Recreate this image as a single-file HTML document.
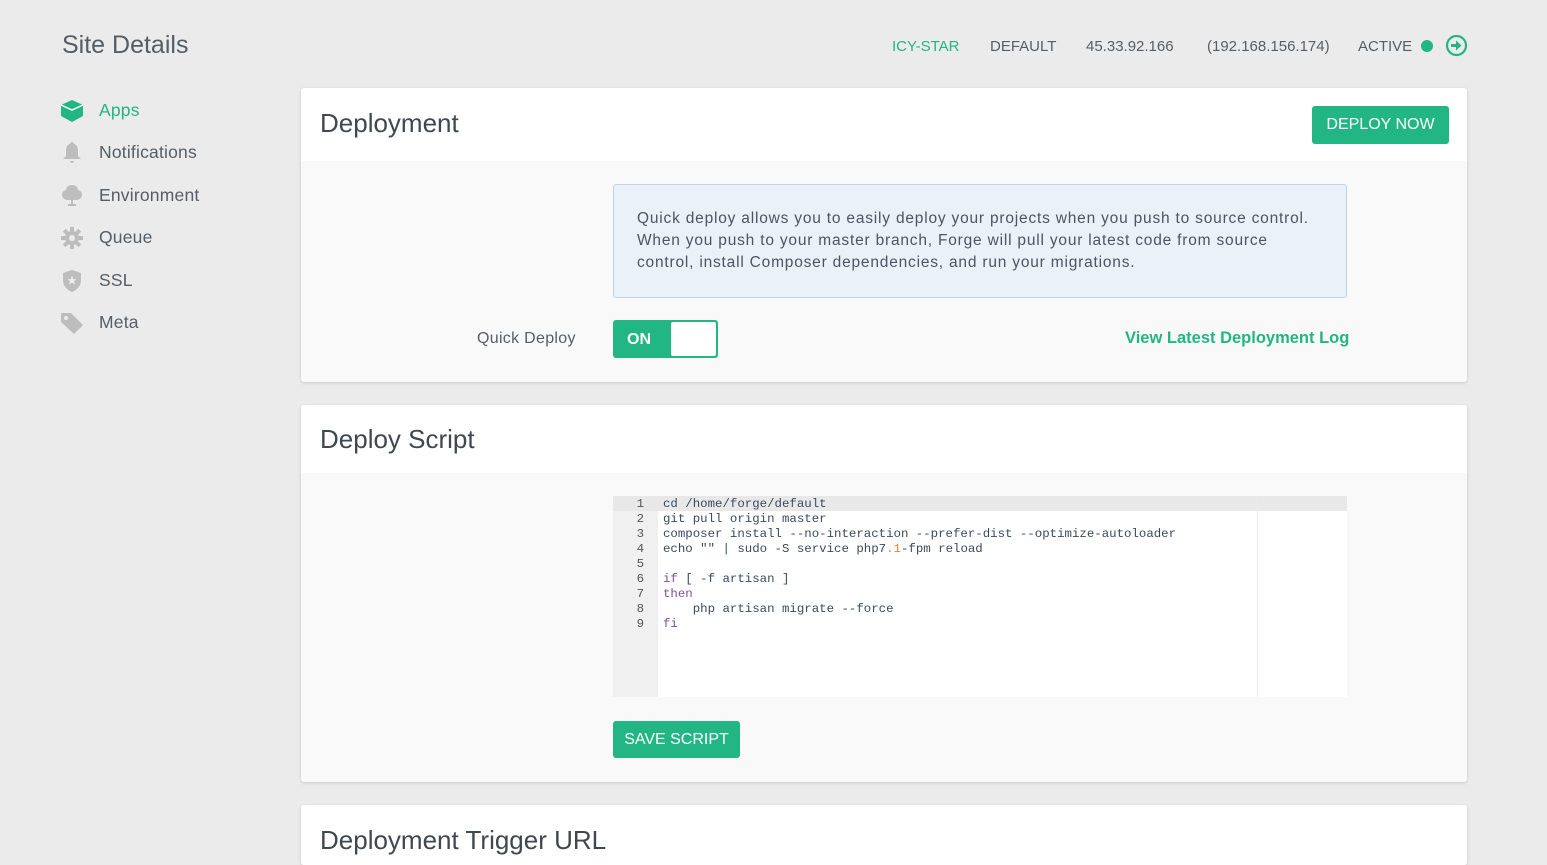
<!DOCTYPE html>
<html><head><meta charset="utf-8"><style>
*{box-sizing:border-box;margin:0;padding:0}
body{width:1547px;height:836px;overflow:hidden;background:#ebebeb;font-family:"Liberation Sans",sans-serif;color:#4b5563;position:relative}
.abs{position:absolute}
.title{left:62px;top:31px;font-size:25px;color:#555e66}
.top{top:38px;font-size:15px;color:#555e66}
.nav{left:60px;font-size:17.5px;color:#555e66}
.nav svg{position:absolute;left:0;top:0}
.nav span{position:absolute;left:39px;top:1px;white-space:nowrap;letter-spacing:.2px}
.card{position:absolute;left:301px;width:1166px;background:#f9f9f9;border-radius:3px;box-shadow:0 1px 3px rgba(0,0,0,.15);overflow:hidden}
.card .hd{background:#fff;height:73px;padding:20px 19px;font-size:26px;color:#3f4850}
.btn{position:absolute;background:#21b683;color:#fff;font-size:16px;border-radius:3px;text-align:center}
.code{font-family:"Liberation Mono",monospace;font-size:12.4px;line-height:15px;color:#3b4a60}
</style></head><body>
<div class="abs title">Site Details</div>
<div class="abs top" style="left:892px;color:#21b683">ICY-STAR</div>
<div class="abs top" style="left:990px">DEFAULT</div>
<div class="abs top" style="left:1086px">45.33.92.166</div>
<div class="abs top" style="left:1207px">(192.168.156.174)</div>
<div class="abs top" style="left:1358px">ACTIVE</div>
<div class="abs" style="left:1421px;top:40px;width:12px;height:12px;border-radius:50%;background:#21b683"></div>
<svg class="abs" style="left:1445px;top:34px" width="23" height="23" viewBox="0 0 23 23"><circle cx="11.5" cy="11.5" r="9.5" fill="none" stroke="#21b683" stroke-width="2.2"/><path d="M6 10h5V6.5l5.5 5-5.5 5V13H6z" fill="#21b683"/></svg>

<div class="abs nav" style="top:99px"><svg width="24" height="24" viewBox="0 0 24 24"><path d="M12 1L23 6v11l-11 6L1 17V6z" fill="#21b683"/><path d="M1 6l11 5 11-5" fill="none" stroke="#fff" stroke-width="1.5"/></svg><span style="color:#21b683">Apps</span></div>
<div class="abs nav" style="top:141px"><svg width="24" height="24" viewBox="0 0 24 24"><path d="M12 1c1 0 2 1 2 2 3 1 4 3 4 7v5l3 3H3l3-3v-5c0-4 1-6 4-7 0-1 1-2 2-2zM10 20h4c0 1-1 2-2 2s-2-1-2-2z" fill="#bdbdbd"/></svg><span>Notifications</span></div>
<div class="abs nav" style="top:184px"><svg width="24" height="24" viewBox="0 0 24 24"><path d="M12 1c4 0 6 3 6 5 3 1 4 3 4 5 0 3-3 5-6 5h-3v4h3v2H8v-2h3v-4H8c-3 0-6-2-6-5 0-2 1-4 4-5 0-2 2-5 6-5z" fill="#bdbdbd"/></svg><span>Environment</span></div>
<div class="abs nav" style="top:226px"><svg width="24" height="24" viewBox="0 0 24 24"><g fill="#bdbdbd"><circle cx="12" cy="12" r="7"/><rect x="10" y="1" width="4" height="22"/><rect x="1" y="10" width="22" height="4"/><rect x="10" y="1" width="4" height="22" transform="rotate(45 12 12)"/><rect x="10" y="1" width="4" height="22" transform="rotate(-45 12 12)"/></g><circle cx="12" cy="12" r="3" fill="#ebebeb"/></svg><span>Queue</span></div>
<div class="abs nav" style="top:269px"><svg width="24" height="24" viewBox="0 0 24 24"><path d="M12 1l9 3v7c0 6-4 10-9 12C7 21 3 17 3 11V4z" fill="#bdbdbd"/><path d="M12 7l1.4 3 3 .3-2.3 2 .7 3-2.8-1.6-2.8 1.6.7-3-2.3-2 3-.3z" fill="#ebebeb"/></svg><span>SSL</span></div>
<div class="abs nav" style="top:311px"><svg width="24" height="24" viewBox="0 0 24 24"><path d="M1 2h10l12 12-9 9L1 11z" fill="#bdbdbd"/><circle cx="6" cy="7" r="2" fill="#ebebeb"/></svg><span>Meta</span></div>

<div class="card" style="top:88px;height:294px">
<div class="hd">Deployment</div>
<div class="btn" style="left:1011px;top:18px;width:137px;height:38px;line-height:38px">DEPLOY NOW</div>
<div class="abs" style="left:312px;top:96px;width:734px;height:114px;background:#eaf1f8;border:1px solid #c4d3e3;border-radius:3px;padding:23px 23px;font-size:15.5px;line-height:22px;color:#4b5563;white-space:nowrap;letter-spacing:.8px">Quick deploy allows you to easily deploy your projects when you push to source control.<br>When you push to your master branch, Forge will pull your latest code from source<br>control, install Composer dependencies, and run your migrations.</div>
<div class="abs" style="left:176px;top:242px;font-size:16px;color:#555e66;letter-spacing:.3px">Quick Deploy</div>
<div class="abs" style="left:312px;top:232px;width:105px;height:38px;background:#21b683;border-radius:3px"><div class="abs" style="left:14px;top:11px;color:#fff;font-weight:bold;font-size:16px">ON</div><div class="abs" style="left:58px;top:2px;width:45px;height:34px;background:#fff;border-radius:2px"></div></div>
<div class="abs" style="left:824px;top:241px;font-size:16.5px;font-weight:bold;color:#21b683">View Latest Deployment Log</div>
</div>

<div class="card" style="top:405px;height:377px">
<div class="hd" style="height:68px;padding-top:19px">Deploy Script</div>
<div class="abs code" style="left:312px;top:91px;width:734px;height:201px;background:#fff">
<div class="abs" style="left:0;top:0;width:45px;height:201px;background:#f0f0f0"></div>
<div class="abs" style="left:0;top:0;width:734px;height:15px;background:#e8e8e8"></div>
<div class="abs" style="left:644px;top:0;width:1px;height:201px;background:#ececec"></div>
<div class="abs" style="left:0;top:1px;width:31px;text-align:right;color:#555">1<br>2<br>3<br>4<br>5<br>6<br>7<br>8<br>9</div>
<div class="abs" style="left:50px;top:1px;white-space:pre">cd /home/forge/default
git pull origin master
composer install --no-interaction --prefer-dist --optimize-autoloader
echo "" | sudo -S service php7<span style="color:#f08030">.1</span>-fpm reload

<span style="color:#8050a0">if</span> [ -f artisan ]
<span style="color:#8050a0">then</span>
    php artisan migrate --force
<span style="color:#8050a0">fi</span></div>
</div>
<div class="btn" style="left:312px;top:316px;width:127px;height:37px;line-height:37px">SAVE SCRIPT</div>
</div>

<div class="card" style="top:805px;height:60px;background:#fff"><div class="hd">Deployment Trigger URL</div></div>
</body></html>
